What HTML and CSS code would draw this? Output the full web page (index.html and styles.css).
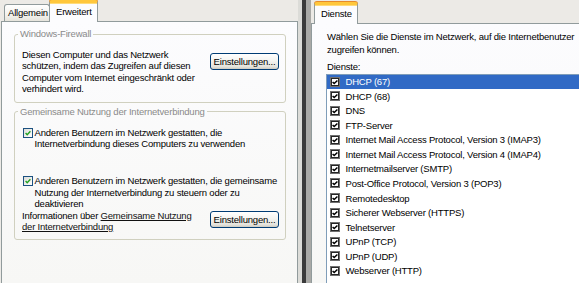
FILE: index.html
```html
<!DOCTYPE html>
<html lang="de">
<head>
  <meta charset="UTF-8" />
  <meta name="viewport" content="width=device-width, initial-scale=1.0"/>
  <title>Erweitert - Dienste</title>
  <link rel="stylesheet" href="styles.css">
</head>
<body>
  <div class="window left">
    <div class="tabs">
      <div class="tab">Allgemein</div>
      <div class="tab active">Erweitert</div>
    </div>
    <div class="page">
      <fieldset class="group">
        <legend>Windows-Firewall</legend>
        <div class="row">
          <p class="text">Diesen Computer und das Netzwerk<br>schützen, indem das Zugreifen auf diesen<br>Computer vom Internet eingeschränkt oder<br>verhindert wird.</p>
          <button class="btn">Einstellungen...</button>
        </div>
      </fieldset>

      <fieldset class="group second">
        <legend>Gemeinsame Nutzung der Internetverbindung</legend>
        <label class="check">
          <span class="box"><svg viewBox="0 0 10 10"><polyline points="2,5 4,7.2 8,2.8"/></svg></span>
          <span>Anderen Benutzern im Netzwerk gestatten, die<br>Internetverbindung dieses Computers zu verwenden</span>
        </label>
        <label class="check later">
          <span class="box"><svg viewBox="0 0 10 10"><polyline points="2,5 4,7.2 8,2.8"/></svg></span>
          <span>Anderen Benutzern im Netzwerk gestatten, die gemeinsame<br>Nutzung der Internetverbindung zu steuern oder zu<br>deaktivieren</span>
        </label>
        <div class="row info">
          <p class="text">Informationen über <a href="#">Gemeinsame Nutzung<br>der Internetverbindung</a></p>
          <button class="btn">Einstellungen...</button>
        </div>
      </fieldset>
    </div>
  </div>

  <div class="split"><div class="split-bar"></div></div>

  <div class="window right">
    <div class="tabs">
      <div class="tab active">Dienste</div>
    </div>
    <div class="page services">
      <p class="intro">Wählen Sie die Dienste im Netzwerk, auf die Internetbenutzer<br>zugreifen können.</p>
      <p class="caption">Dienste:</p>
      <ul class="list">
        <li class="selected"><span class="lbox"><svg viewBox="0 0 10 10"><polyline points="2,5 4,7 8,3"/></svg></span>DHCP (67)</li>
        <li><span class="lbox"><svg viewBox="0 0 10 10"><polyline points="2,5 4,7 8,3"/></svg></span>DHCP (68)</li>
        <li><span class="lbox"><svg viewBox="0 0 10 10"><polyline points="2,5 4,7 8,3"/></svg></span>DNS</li>
        <li><span class="lbox"><svg viewBox="0 0 10 10"><polyline points="2,5 4,7 8,3"/></svg></span>FTP-Server</li>
        <li><span class="lbox"><svg viewBox="0 0 10 10"><polyline points="2,5 4,7 8,3"/></svg></span>Internet Mail Access Protocol, Version 3 (IMAP3)</li>
        <li><span class="lbox"><svg viewBox="0 0 10 10"><polyline points="2,5 4,7 8,3"/></svg></span>Internet Mail Access Protocol, Version 4 (IMAP4)</li>
        <li><span class="lbox"><svg viewBox="0 0 10 10"><polyline points="2,5 4,7 8,3"/></svg></span>Internetmailserver (SMTP)</li>
        <li><span class="lbox"><svg viewBox="0 0 10 10"><polyline points="2,5 4,7 8,3"/></svg></span>Post-Office Protocol, Version 3 (POP3)</li>
        <li><span class="lbox"><svg viewBox="0 0 10 10"><polyline points="2,5 4,7 8,3"/></svg></span>Remotedesktop</li>
        <li><span class="lbox"><svg viewBox="0 0 10 10"><polyline points="2,5 4,7 8,3"/></svg></span>Sicherer Webserver (HTTPS)</li>
        <li><span class="lbox"><svg viewBox="0 0 10 10"><polyline points="2,5 4,7 8,3"/></svg></span>Telnetserver</li>
        <li><span class="lbox"><svg viewBox="0 0 10 10"><polyline points="2,5 4,7 8,3"/></svg></span>UPnP (TCP)</li>
        <li><span class="lbox"><svg viewBox="0 0 10 10"><polyline points="2,5 4,7 8,3"/></svg></span>UPnP (UDP)</li>
        <li><span class="lbox"><svg viewBox="0 0 10 10"><polyline points="2,5 4,7 8,3"/></svg></span>Webserver (HTTP)</li>
      </ul>
    </div>
  </div>
</body>
</html>
```

FILE: styles.css
```css
html, body {
  height: 100%;
}

body {
  margin: 0;
  display: flex;
  overflow: hidden;
  font-family: 'Liberation Sans', Arial, sans-serif;
  font-size: 9.5px;
  letter-spacing: -0.2px;
  color: #000;
  background: #eceae6;
}

.window {
  display: flex;
  flex-direction: column;
  height: 100%;
}

.left {
  width: 298px;
  flex: none;
}

.right {
  flex: 1;
  min-width: 0;
}

/* tab strip */
.tabs {
  display: flex;
  align-items: flex-end;
  padding-left: 3px;
  height: 21px;
  flex: none;
}

.right .tabs {
  height: 23px;
}

.tab {
  height: 17px;
  line-height: 16px;
  padding: 0 0 0 3px;
  white-space: nowrap;
  border: 1px solid #919b9c;
  border-bottom: none;
  border-radius: 3px 3px 0 0;
  background: linear-gradient(#ffffff, #f3f2ee 60%, #e6e4dc);
  box-sizing: border-box;
  margin-left: 1px;
}

.left .tab {
  width: 46px;
}

.tab.active {
  position: relative;
  z-index: 1;
  height: 22px;
  line-height: 17px;
  margin-bottom: -1px;
  margin-left: -1px;
  width: 49px;
  padding-left: 6px;
  background: #fcfcfe;
  border-top: 3px solid #ffc73c;
  box-shadow: inset 0 1px 0 #ffdb7a, 0 -1px 0 #e68b2c;
}

.right .tab.active {
  width: 44px;
  margin-left: 0;
  padding-left: 6px;
}

/* tab page */
.page {
  flex: 1;
  margin-left: 1px;
  border: 1px solid #919b9c;
  border-bottom: none;
  background: linear-gradient(#fcfcfe, #f7f7f5);
}

.left .page {
  padding-top: 6px;
}

/* group boxes */
.group {
  margin: 0 11px 0 12px;
  padding: 9px 6px 7px 7px;
  border: 1px solid #d0d0bf;
  border-radius: 3px;
  min-width: 0;
}

.group legend {
  padding: 0 2px;
  margin-left: -4px;
  line-height: 12px;
  color: #8a8a8a;
}

.group.second {
  margin-top: 3px;
}

.text {
  margin: 0;
  line-height: 11.4px;
}

.row {
  display: flex;
  justify-content: space-between;
  align-items: flex-start;
}

.btn {
  flex: none;
  width: 69px;
  height: 17px;
  margin-top: 4px;
  padding: 0;
  font: inherit;
  letter-spacing: inherit;
  color: #000;
  border: 1px solid #003c74;
  border-radius: 3px;
  background: linear-gradient(#ffffff, #f4f4f0 45%, #e4e3dc 85%, #cdcac0);
}

.info .btn {
  margin-top: 1.5px;
}

a {
  color: #111;
  text-decoration: underline;
}

/* xp checkbox */
.check {
  display: flex;
  align-items: flex-start;
  line-height: 11.4px;
}

.check.later {
  margin-top: 26px;
}

.box {
  flex: none;
  width: 10px;
  height: 10px;
  margin: 1px 1.5px 0 1px;
  border: 1px solid #1c5180;
  box-sizing: border-box;
  background: linear-gradient(135deg, #dcdcd7, #ffffff);
}

.box svg {
  display: block;
  width: 8px;
  height: 8px;
}

.box polyline {
  fill: none;
  stroke: #21a121;
  stroke-width: 1.7;
}

/* separator between the two windows */
.split {
  width: 13px;
  flex: none;
  box-sizing: border-box;
  border-left: 4px solid #dcdcd8;
  border-right: 5px solid #a9a9a6;
}

.split-bar {
  height: 100%;
  background: #3a3a3a;
}

/* services page */
.services {
  display: flex;
  flex-direction: column;
  min-height: 0;
  margin-left: 0;
  padding: 6px 0 0 14px;
  border-right: none;
}

.intro,
.caption {
  margin: 0 0 0 1px;
  line-height: 13px;
  white-space: nowrap;
}

.caption {
  margin-top: 4px;
  margin-bottom: 0.5px;
}

.list {
  flex: 1;
  list-style: none;
  margin: 0;
  padding: 0;
  border-top: 1px solid #7f9db9;
  border-left: 1px solid #7f9db9;
  background: #fff;
  overflow: hidden;
}

.list li {
  display: flex;
  align-items: center;
  height: 14.54px;
  padding-left: 3px;
  white-space: nowrap;
}

.list li.selected {
  background: #316ac5;
  color: #fff;
}

.lbox {
  flex: none;
  width: 10px;
  height: 10px;
  margin-right: 5.5px;
  box-sizing: border-box;
  border: 1px solid #707070;
  box-shadow: inset 0 0 0 1px #262626;
  background: #fff;
}

.lbox svg {
  display: block;
  width: 8px;
  height: 8px;
}

.lbox polyline {
  fill: none;
  stroke: #000;
  stroke-width: 1.8;
}
```
